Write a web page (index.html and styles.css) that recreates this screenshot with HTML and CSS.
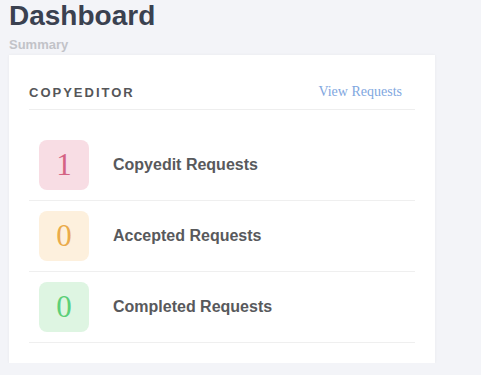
FILE: index.html
```
<!DOCTYPE html>
<html>
<head>
<meta charset="utf-8">
<link rel="stylesheet" href="styles.css">
</head>
<body>
<div class="page">
  <h1 class="title">Dashboard</h1>
  <div class="subtitle">Summary</div>
  <div class="card">
    <div class="card-head">
      <span class="card-title">COPYEDITOR</span>
      <a class="card-link" href="#">View Requests</a>
    </div>
    <div class="row">
      <div class="badge badge-pink">1</div>
      <div class="label">Copyedit Requests</div>
    </div>
    <div class="row">
      <div class="badge badge-orange">0</div>
      <div class="label">Accepted Requests</div>
    </div>
    <div class="row">
      <div class="badge badge-green">0</div>
      <div class="label">Completed Requests</div>
    </div>
  </div>
</div>
</body>
</html>
```
FILE: styles.css
```
html, body {
  margin: 0;
  padding: 0;
  background: #f3f4f8;
}
.page {
  padding: 0 9px;
  font-family: "Liberation Sans", Arial, sans-serif;
  width: 426px;
}
.title {
  margin: 0;
  font-size: 28px;
  line-height: 32px;
  font-weight: 700;
  color: #3a4150;
}
.subtitle {
  margin-top: 5px;
  font-size: 13px;
  line-height: 16px;
  font-weight: 700;
  color: #c2c3c8;
}
.card {
  margin-top: 2px;
  background: #ffffff;
  padding: 20px;
  box-shadow: 0 0 3px rgba(0,0,0,0.05);
}
.card-head {
  display: flex;
  justify-content: space-between;
  align-items: center;
  height: 34px;
  border-bottom: 1px solid #eeeeee;
  margin-bottom: 20px;
}
.card-title {
  font-size: 13px;
  font-weight: 700;
  letter-spacing: 2px;
  color: #555659;
}
.card-link {
  font-family: "Liberation Serif", "Times New Roman", serif;
  font-size: 14px;
  color: #7fa7e0;
  text-decoration: none;
  margin-right: 13px;
}
.row {
  display: flex;
  align-items: center;
  padding: 10px 10px;
  border-bottom: 1px solid #efefef;
}
.badge {
  width: 50px;
  height: 50px;
  border-radius: 8px;
  display: flex;
  align-items: center;
  justify-content: center;
  font-family: "Liberation Serif", "Times New Roman", serif;
  font-size: 31px;
}
.badge-pink { background: #f8dde4; color: #d46383; }
.badge-orange { background: #fdf0dd; color: #eaab4b; }
.badge-green { background: #def5e2; color: #5ccf78; }
.label {
  margin-left: 24px;
  font-size: 16px;
  font-weight: 700;
  color: #58595c;
}
```
